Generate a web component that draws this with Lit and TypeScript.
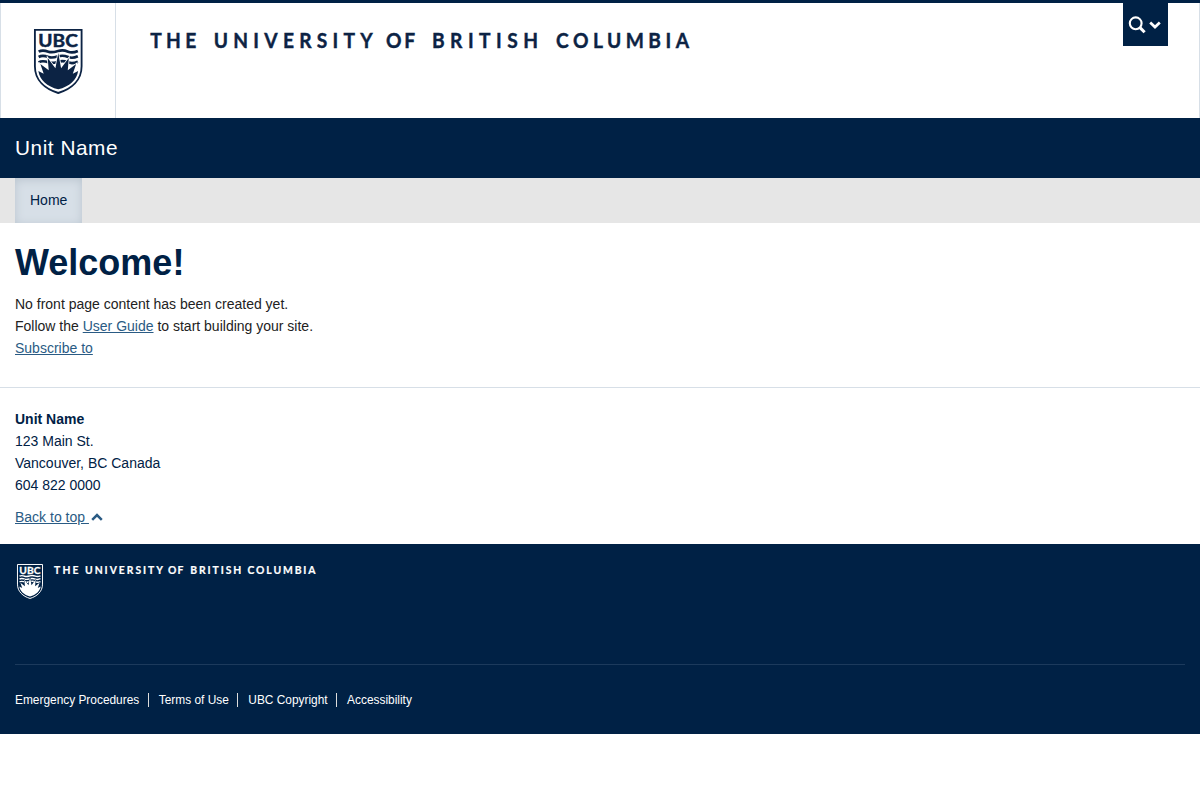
import { LitElement, html, css, svg } from "lit";
import { customElement, property } from "lit/decorators.js";

interface Word {
  text: string;
  x: number;
  width: number;
}

const FOOTER_LINKS = ["Emergency Procedures", "Terms of Use", "UBC Copyright", "Accessibility"];

const HEADER_WORDS: Word[] = [
  { text: "THE", x: 0.2, width: 46 },
  { text: "UNIVERSITY", x: 63.8, width: 159 },
  { text: "OF", x: 236, width: 29 },
  { text: "BRITISH", x: 282, width: 106 },
  { text: "COLUMBIA", x: 406, width: 133 },
];

const FOOTER_WORDS: Word[] = [
  { text: "THE", x: 0, width: 24.5 },
  { text: "UNIVERSITY", x: 31, width: 78 },
  { text: "OF", x: 114, width: 15.5 },
  { text: "BRITISH", x: 136.3, width: 51 },
  { text: "COLUMBIA", x: 193.5, width: 68 },
];

/* Horizontal condensing of the wordmark letters. */
const CONDENSE = 0.96;

@customElement("ubc-shield")
export class UbcShield extends LitElement {
  static styles = css`
    :host { display: block; }
    svg { display: block; width: 100%; height: 100%; overflow: visible; }
    .frame { fill: var(--shield-bg); stroke: currentColor; stroke-width: 5.5; }
    .wave { fill: none; stroke: currentColor; stroke-width: 8; }
    .sun { fill: currentColor; stroke: var(--shield-bg); stroke-width: 5; paint-order: stroke; }
    .letters { fill: currentColor; font: 700 53px Lato, sans-serif; stroke: currentColor; stroke-width: 1.5; }
  `;

  render() {
    const wave = (y: number) => svg`<path class="wave"
      d="M14 ${y + 1} C24 ${y - 5} 32 ${y - 3} 43 ${y + 1} S62 ${y + 2} 72.5 ${y - 1} S92 ${y - 3} 102 ${y + 1} S122 ${y + 3} 131 ${y - 1}"/>`;
    return html`<svg viewBox="0 0 145 195" preserveAspectRatio="none" aria-label="UBC">
      <path class="frame" d="M2.7 2.7H142.3V112C142.3 154 112 180 72.5 192C33 180 2.7 154 2.7 112Z"/>
      <text class="letters" x="13" y="53" textLength="118" lengthAdjust="spacingAndGlyphs">UBC</text>
      ${wave(67)}${wave(83)}${wave(99)}
      <path class="sun" d="M72.5 72L81 118L104 87L101 124L126 105L116 134L132 126C128 152 106 173 72.5 181C39 173 17 152 13 126L29 134L19 105L44 124L41 87L64 118Z"/>
    </svg>`;
  }
}

@customElement("ubc-wordmark")
export class UbcWordmark extends LitElement {
  @property({ attribute: false }) words: Word[] = [];
  @property({ type: Number }) size = 20;
  @property({ type: Number }) baseline = 15;

  static styles = css`
    :host { display: block; }
    svg { display: block; width: 100%; height: 100%; overflow: visible; }
    text { fill: currentColor; stroke: currentColor; stroke-width: 0.02em; font-family: Lato, sans-serif; font-weight: 700; }
  `;

  render() {
    return html`<svg>
      ${this.words.map(
        (w) => svg`<text transform="translate(${w.x} ${this.baseline}) scale(${CONDENSE} 1)"
          font-size=${this.size} textLength=${w.width / CONDENSE}>${w.text}</text>`
      )}
    </svg>`;
  }
}

@customElement("app-root")
export class AppRoot extends LitElement {
  static styles = css`
    :host {
      display: block;
      font: 14px/22px "Liberation Sans", Arial, sans-serif;
      color: #222;
      background: #fff;
    }
    * { box-sizing: border-box; }
    a { color: #2a5b84; text-decoration: underline; }
    p, h1 { margin: 0; }
    .header {
      display: flex;
      height: 118px;
      border-top: 3px solid #002145;
      box-shadow: inset 1px 0 #d7dfe7, inset -1px 0 #d7dfe7;
      color: #0c2344;
    }
    .logo {
      width: 116px;
      padding: 26px 0 0 34px;
      border-right: 1px solid #d7dfe7;
      --shield-bg: #fff;
    }
    .logo ubc-shield { width: 48.5px; height: 65px; }
    .wordmark { flex: 1; padding: 30px 0 0 34px; }
    .wordmark ubc-wordmark { width: 542px; height: 20px; }
    .search {
      display: flex;
      align-items: flex-start;
      width: 45px;
      height: 43px;
      margin-right: 32px;
      padding: 13px 0 0 5px;
      background: #002145;
    }
    .search svg { display: block; }
    .unit {
      height: 60px;
      padding: 0 15px;
      background: #002145;
      color: #fff;
      font-size: 20.8px;
      line-height: 60px;
      letter-spacing: 0.53px;
    }
    .nav { display: flex; height: 45px; padding-left: 15px; background: #e6e6e6; }
    .tab {
      padding: 0 15px;
      line-height: 45px;
      color: #002145;
      background: #d7dfe7;
      text-decoration: none;
      box-shadow: inset 0 2px 10px #bbc5cf;
    }
    .content { height: 165px; padding: 20px 15px 0; border-bottom: 1px solid #d7dfe7; }
    h1 { margin-bottom: 10px; color: #002145; font-size: 36px; line-height: 40px; }
    .address { height: 156px; padding: 20px 15px 0; color: #002145; }
    .top { margin-top: 10px; }
    .top svg { vertical-align: -1px; margin-left: 2px; }
    .footer { height: 190px; padding: 0 15px; background: #002145; color: #fff; }
    .brand { display: flex; height: 121px; padding: 20px 0 0 1.5px; border-bottom: 1px solid #1c3a5c; --shield-bg: #002145; }
    .brand ubc-shield { width: 26px; height: 35px; }
    .brand ubc-wordmark { width: 264px; height: 12px; margin-left: 11.5px; }
    .links { display: flex; padding-top: 28px; font-size: 11.9px; line-height: 14px; }
    .links a { color: #fff; text-decoration: none; }
    .links a + a { margin-left: 8.5px; padding-left: 10px; border-left: 1px solid #ddd; }
  `;

  render() {
    return html`
      <header class="header">
        <div class="logo"><ubc-shield></ubc-shield></div>
        <div class="wordmark"><ubc-wordmark .words=${HEADER_WORDS} size="20" baseline="14.8"></ubc-wordmark></div>
        <div class="search">
          <svg width="35" height="20" viewBox="0 0 35 20" fill="none" stroke="#fff">
            <circle cx="7.7" cy="7.3" r="5.9" stroke-width="2.1"/>
            <path d="M12 11.6L16.6 16.2" stroke-width="3"/>
            <path d="M22.2 6.6L27 11.1L31.8 6.6" stroke-width="2.7"/>
          </svg>
        </div>
      </header>
      <div class="unit">Unit Name</div>
      <nav class="nav"><a class="tab" href="#">Home</a></nav>
      <main class="content">
        <h1>Welcome!</h1>
        <p>No front page content has been created yet.</p>
        <p>Follow the <a href="#">User Guide</a> to start building your site.</p>
        <p><a href="#">Subscribe to</a></p>
      </main>
      <section class="address">
        <p><b>Unit Name</b></p>
        <p>123 Main St.</p>
        <p>Vancouver, BC Canada</p>
        <p>604 822 0000</p>
        <p class="top"><a href="#">Back to top&nbsp;</a><svg width="12" height="11" viewBox="0 0 12 11" fill="none" stroke="#2a5b84" stroke-width="2.5"><path d="M1.2 7.8L6 3L10.8 7.8"/></svg></p>
      </section>
      <footer class="footer">
        <div class="brand">
          <ubc-shield></ubc-shield>
          <ubc-wordmark .words=${FOOTER_WORDS} size="10.8" baseline="10"></ubc-wordmark>
        </div>
        <div class="links">${FOOTER_LINKS.map((t) => html`<a href="#">${t}</a>`)}</div>
      </footer>
    `;
  }
}
